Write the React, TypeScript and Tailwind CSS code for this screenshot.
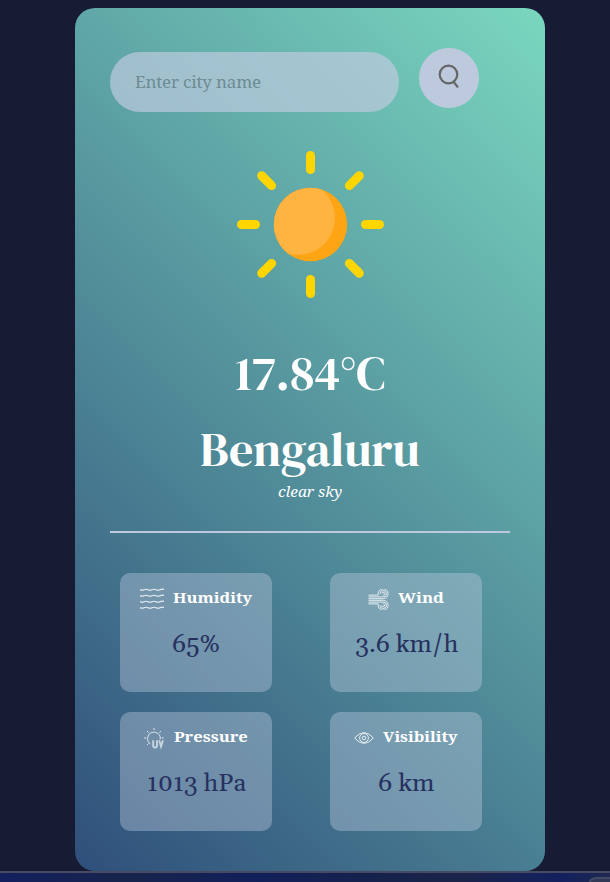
import React from "react";

function HumidityIcon() {
  return (
    <svg width="24" height="22" viewBox="0 0 24 22" fill="none" stroke="#e5edf2" strokeWidth="1.1">
      <path d="M0 1.500Q2 2.700 4 1.700T8 1.700T12 1.700T16 1.700T20 1.700T24 1.400" />
      <path d="M0 7.500Q2 8.700 4 7.700T8 7.700T12 7.700T16 7.700T20 7.700T24 7.400" />
      <path d="M0 13.500Q2 14.700 4 13.700T8 13.700T12 13.700T16 13.700T20 13.700T24 13.400" />
      <path d="M0 19.500Q2 20.700 4 19.700T8 19.700T12 19.700T16 19.700T20 19.700T24 19.400" />
    </svg>
  );
}

function WindIcon() {
  return (
    <svg width="21" height="21" viewBox="0 0 21 21" fill="none" stroke="#e5edf2" strokeWidth="1">
      <path d="M0.500 6.100h9.700M0.500 7.900h14.700a3.200 3.200 0 1 0-3.200-3.200M10.300 6.100a5 5 0 1 1 5 3.600H0.500M13.800 4.700a1.400 1.400 0 1 1 1.400 1.400" />
      <path d="M0.500 14.900h9.700M0.500 13.100h14.700a3.200 3.200 0 1 1-3.200 3.200M10.300 14.900a5 5 0 1 0 5-3.600H0.500M13.800 16.300a1.400 1.400 0 1 0 1.400-1.400" />
    </svg>
  );
}

function UvIcon() {
  return (
    <svg width="21" height="21" viewBox="0 0 21 21" fill="none" stroke="#e5edf2" strokeWidth="0.9" className="overflow-visible">
      <path d="M6.500 15.800a6.300 6.300 0 1 1 9.700-4.500M10 0v2.200M0 10h2.200M17.600 10h2.200M3 3l1.600 1.600M17 3l-1.600 1.600M3 17l1.600-1.600" />
      <path d="M9.200 12.200v5.300q0 2 1.900 2t1.900-2v-5.300M15.200 12.200l1.800 6.300L19 12.200" strokeWidth="1.900" strokeOpacity="0.75" />
    </svg>
  );
}

function EyeIcon() {
  return (
    <svg width="20" height="20" viewBox="0 0 20 20" fill="none" stroke="#e5edf2" strokeWidth="1">
      <path d="M.6 10Q10-.8 19.400 10Q10 20.800 .6 10Z" />
      <circle cx="10" cy="10" r="4.400" />
      <circle cx="10" cy="10" r="1.800" />
    </svg>
  );
}

function Sun() {
  return (
    <svg width="148" height="148" viewBox="-0.500 -0.500 148 148">
      <clipPath id="disc"><circle cx="74" cy="74" r="36.700" /></clipPath>
      <circle cx="74" cy="74" r="36.700" fill="#ffa513" />
      <circle cx="61.500" cy="67.500" r="37" fill="#ffb341" clipPath="url(#disc)" />
      {[0, 45, 90, 135, 180, 225, 270, 315].map((angle) => (
        <rect key={angle} x="69.500" y="0.500" width="9" height="23" rx="4.500" fill="#ffd500" transform={`rotate(${angle} 74 74)`} />
      ))}
    </svg>
  );
}

function Fitted({ text, width, className }: { text: string; width: number; className: string }) {
  const ref = React.useRef<HTMLSpanElement>(null);
  const [scale, setScale] = React.useState(1);
  React.useLayoutEffect(() => {
    if (ref.current) setScale(width / ref.current.offsetWidth);
  }, [width, text]);
  return (
    <span className="flex justify-start" style={{ width }}>
      <span ref={ref} className={`inline-block shrink-0 origin-left whitespace-nowrap ${className}`} style={{ transform: `scaleX(${scale})` }}>
        {text}
      </span>
    </span>
  );
}

const serif = "font-['Gelasio','Liberation_Serif',serif] [font-variant-numeric:oldstyle-nums]";
const display = "font-['DM_Serif_Display','Liberation_Serif',serif]";
const label = "font-['Noto_Serif','Droid_Serif','DejaVu_Serif',serif]";

const stats = [
  { name: "Humidity", nameWidth: 79, value: "65%", valueWidth: 48, icon: <HumidityIcon /> },
  { name: "Wind", nameWidth: 46, value: "3.6 km/h", valueWidth: 103, icon: <WindIcon /> },
  { name: "Pressure", nameWidth: 74, value: "1013 hPa", valueWidth: 99, icon: <UvIcon /> },
  { name: "Visibility", nameWidth: 75, value: "6 km", valueWidth: 56, icon: <EyeIcon /> },
];

export default function App() {
  return (
    <div className="flex h-[882px] w-[610px] flex-col overflow-hidden bg-[#181b34] pt-2">
      <main className="ml-[75px] h-[863px] w-[470px] shrink-0 rounded-[20px] bg-[linear-gradient(45deg,#2f4f7a,#7ad7bf)] px-[35px] pt-10">
        <div className="flex gap-5">
          <input
            aria-label="City"
            placeholder="Enter city name"
            className={`mt-1 h-[60px] w-[289px] rounded-full bg-[#bdcade]/70 px-[25px] pb-[2px] text-[17px] tracking-[-0.17px] outline-none placeholder:text-[#6d8b92] ${label}`}
          />
          <button aria-label="Search" className="flex h-[60px] w-[60px] items-center justify-center rounded-full bg-[#bdcade]">
            <svg width="22" height="25" viewBox="0 0 22 25" className="mb-[3px]" fill="none" stroke="#666" strokeWidth="2.200" strokeLinecap="round">
              <circle cx="10.500" cy="10.500" r="8.800" />
              <path d="M15.500 17.800l4 4.900" />
            </svg>
          </button>
        </div>
        <div className="mt-[38px] flex justify-center"><Sun /></div>
        <div className="mt-[39px] flex flex-col items-center text-white">
          <h1 className="leading-[72px]"><Fitted text="17.84°C" width={150} className={`text-[48px] font-normal ${display}`} /></h1>
          <h2 className="mt-1 leading-[72px]"><Fitted text="Bengaluru" width={220} className={`text-[48px] font-normal ${display}`} /></h2>
          <p className="mt-[-6px] leading-6"><Fitted text="clear sky" width={64} className={`text-[15px] italic ${label}`} /></p>
        </div>
        <div className="mt-[28px] h-[2px] w-[400px] bg-[#bdcade]" />
        <section className="ml-[10px] mt-[40px] grid grid-cols-[152px_152px] gap-x-[58px] gap-y-5">
          {stats.map((stat) => (
            <article key={stat.name} className="flex h-[119px] flex-col items-center rounded-[10px] bg-[#bdcade]/40 pt-[14px]">
              <div className="flex h-6 items-center gap-[9px]">
                {stat.icon}
                <h3 className="pb-1 leading-6 text-white"><Fitted text={stat.name} width={stat.nameWidth} className={`text-[15px] font-bold ${label}`} /></h3>
              </div>
              <p className="mt-[16px] leading-[36px] text-[#26315f]">
                <Fitted text={stat.value} width={stat.valueWidth} className={`text-[24px] ${serif}`} />
              </p>
            </article>
          ))}
        </section>
      </main>
      <footer className="flex h-[11px] shrink-0 justify-end border-t-2 border-[#464a63] bg-[linear-gradient(90deg,#13205e,#18234b_20%,#12205a_42%,#15214c_60%,#1b2449_75%,#13205e_92%,#202850)]">
        <div className="mt-1 h-5 w-[22px] rounded-tl-lg border-l-2 border-t-2 border-[#414966] bg-[#303856]" />
      </footer>
    </div>
  );
}
